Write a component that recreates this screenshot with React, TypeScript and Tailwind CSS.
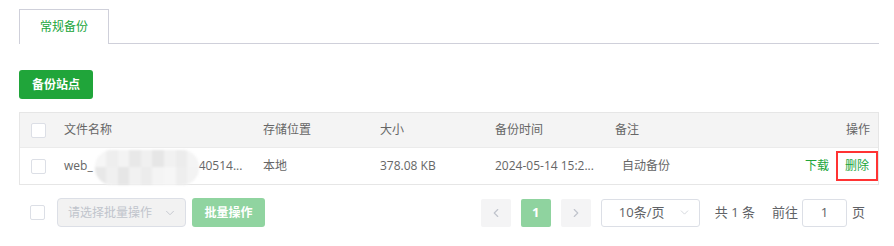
import React from "react";
import { ChevronDown, ChevronLeft, ChevronRight } from "lucide-react";

const font = { fontFamily: '"Open Sans","Noto Sans CJK SC",sans-serif' };

function Box() {
  return <span className="block w-[15px] h-[15px] border border-[#dcdfe6] rounded-[2px] bg-white" />;
}

function Blob() {
  const cols = ["#f6f6f6", "#eeeeee", "#f3f3f3", "#e8e8e8", "#f0f0f0", "#e6e6e6", "#f1f1f1", "#ececec", "#f4f4f4"];
  return (
    <span className="inline-flex w-[104px] h-[35px] rounded-[17px] overflow-hidden bg-[#f7f7f7] align-middle blur-[1px] mt-[2px] ml-[2px]">
      {cols.map((c, i) => (
        <span key={i} className="flex flex-col flex-1">
          <span className="flex-1" style={{ background: c }} />
          <span className="flex-1" style={{ background: cols[(i + 3) % cols.length] }} />
        </span>
      ))}
    </span>
  );
}

export default function App() {
  return (
    <div className="w-[894px] h-[246px] bg-white text-[12px] text-[#666]" style={font}>
      <div className="pl-[19px] pr-[15px] pt-[9px]">
        <div className="flex items-end">
          <div className="w-[90px] h-[35px] border border-b-0 border-[#cfd0da] flex items-center justify-center text-[#20a53a]">
            常规备份
          </div>
          <div className="flex-1 border-b border-[#cfd0da]" />
        </div>
        <button className="mt-[26px] w-[74px] h-[29px] rounded-[3px] bg-[#20a53a] text-white font-semibold flex items-center justify-center">
          备份站点
        </button>
        <div className="mt-[13px] w-[860px] border border-[#e6e6e6]">
          <div className="h-[35px] bg-[#f4f4f4] flex items-center border-b border-[#ebebeb]">
            <div className="w-[44px] pl-[11px]"><Box /></div>
            <div className="w-[199px]">文件名称</div>
            <div className="w-[117px]">存储位置</div>
            <div className="w-[115px]">大小</div>
            <div className="w-[120px]">备份时间</div>
            <div className="flex-1">备注</div>
            <div className="pr-[8px]">操作</div>
          </div>
          <div className="h-[36px] flex items-center">
            <div className="w-[44px] pl-[11px]"><Box /></div>
            <div className="w-[199px] flex items-center whitespace-nowrap">
              <span>web_</span>
              <Blob />
              <span>40514...</span>
            </div>
            <div className="w-[117px]">本地</div>
            <div className="w-[115px]">378.08 KB</div>
            <div className="w-[127px] whitespace-nowrap">2024-05-14 15:2...</div>
            <div className="flex-1">自动备份</div>
            <div className="flex items-center text-[#20a53a]">
              <span className="mr-[7px]">下载</span>
              <span className="w-[42px] h-[30px] border-2 border-[#f33] flex items-center justify-center">删除</span>
            </div>
          </div>
        </div>
        <div className="mt-[13px] flex items-center h-[29px]">
          <div className="w-[38px] pl-[11px]"><Box /></div>
          <div className="w-[129px] h-[29px] border border-[#dcdfe6] rounded-[4px] bg-[#f2f2f2] flex items-center justify-between pl-[10px] pr-[8px] text-[#c0c4cc]">
            <span>请选择批量操作</span>
            <ChevronDown size={14} strokeWidth={1.5} />
          </div>
          <button className="ml-[6px] w-[73px] h-[29px] rounded-[3px] bg-[#90d4a0] text-white font-semibold flex items-center justify-center">
            批量操作
          </button>
          <div className="ml-auto mr-[14px] flex items-center">
            <span className="w-[30px] h-[28px] rounded-[2px] bg-[#f4f4f5] flex items-center justify-center text-[#c0c4cc]">
              <ChevronLeft size={14} strokeWidth={2} />
            </span>
            <span className="ml-[10px] w-[30px] h-[28px] rounded-[2px] bg-[#8fd39f] flex items-center justify-center text-white font-bold text-[13px]">1</span>
            <span className="ml-[10px] w-[30px] h-[28px] rounded-[2px] bg-[#f4f4f5] flex items-center justify-center text-[#c0c4cc]">
              <ChevronRight size={14} strokeWidth={2} />
            </span>
            <div className="ml-[10px] w-[99px] h-[28px] border border-[#dcdfe6] rounded-[3px] flex items-center pl-[17px] pr-[8px] text-[#606266] text-[13px]">
              <span className="flex-1">10条/页</span>
              <ChevronDown size={13} strokeWidth={1.2} className="text-[#c0c4cc]" />
            </div>
            <span className="ml-[15px] text-[#606266] text-[13px]">共 1 条</span>
            <span className="ml-[17px] text-[#606266] text-[13px]">前往</span>
            <span className="ml-[4px] w-[45px] h-[28px] border border-[#dcdfe6] rounded-[3px] flex items-center justify-center text-[#606266] text-[13px]">1</span>
            <span className="ml-[5px] text-[#606266] text-[13px]">页</span>
          </div>
        </div>
      </div>
    </div>
  );
}
